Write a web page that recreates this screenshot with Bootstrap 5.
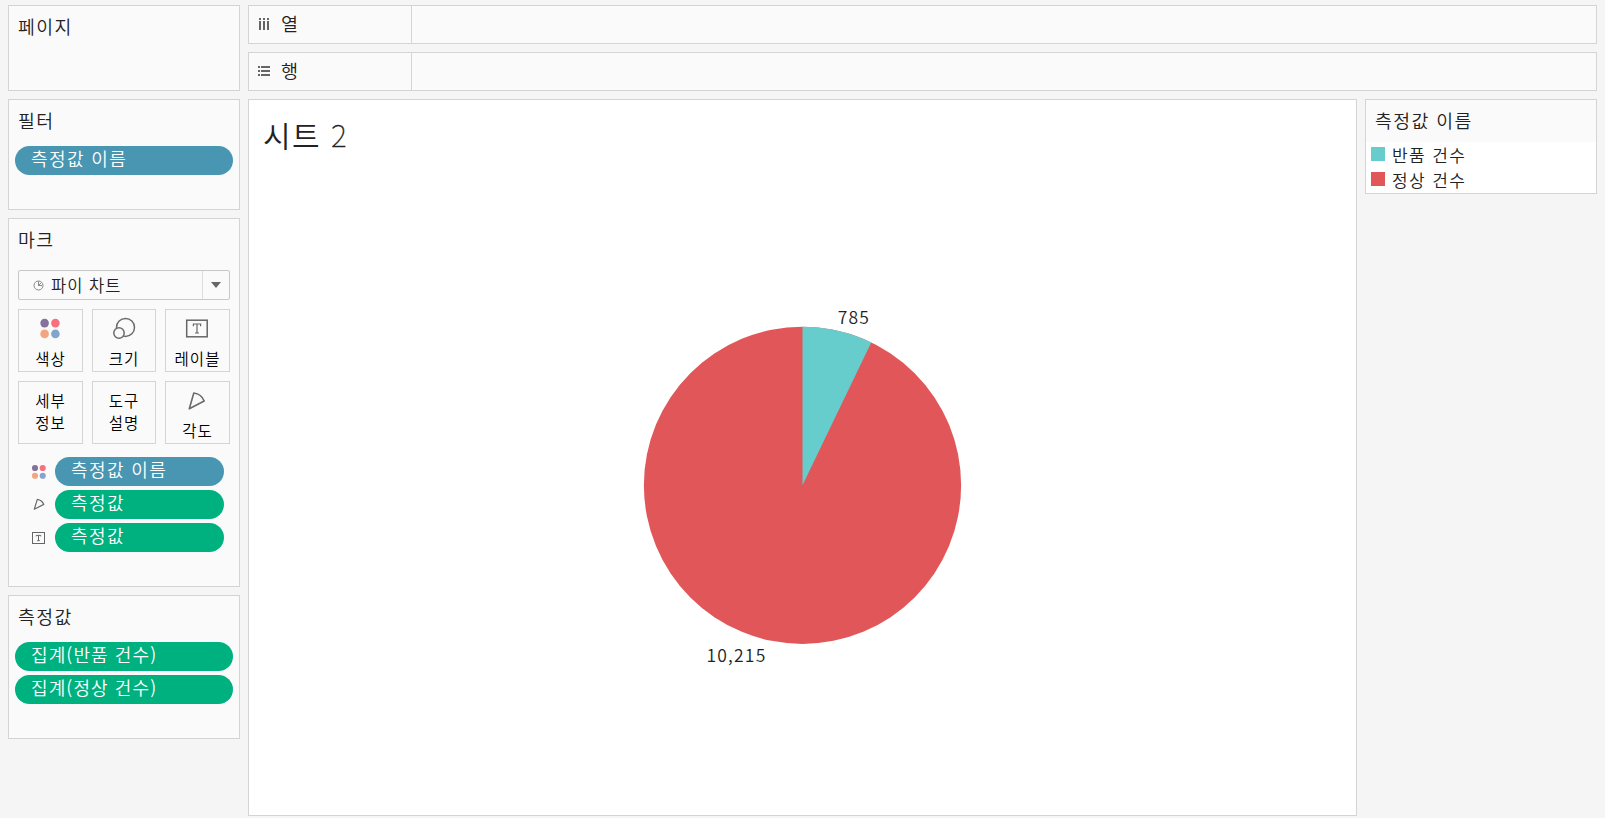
<!DOCTYPE html>
<html lang="ko">
<head>
  <meta charset="UTF-8" />
  <meta name="viewport" content="width=device-width, initial-scale=1" />
  <title>시트 2</title>
  <link href="https://cdn.jsdelivr.net/npm/bootstrap@5.3.0/dist/css/bootstrap.min.css" rel="stylesheet" />
  <style>
    body {
      background-color: #f5f5f5;
      color: #222;
      font-family: "Noto Sans CJK KR", sans-serif;
      font-weight: 350;
      font-size: 18px;
      letter-spacing: 1.4px;
      white-space: nowrap;
    }
    .workspace {
      height: 818px;
      padding: 5px 8px 2px;
      gap: 8px;
    }
    .side {
      width: 232px;
    }
    .panel {
      background-color: #fafafa;
      border: 1px solid #d4d4d4;
    }
    .panel-title {
      height: 46px;
      line-height: 41px;
      padding-left: 9px;
      font-size: 18.3px;
    }
    .panel-pages { height: 86px; }
    .panel-filters { height: 111px; }
    .panel-marks { height: 369px; }
    .panel-values { height: 144px; }

    /* field pills */
    .pill {
      height: 29px;
      line-height: 24px;
      border-radius: 15px;
      padding-left: 16px;
      color: #fff;
      background-color: #00b180;
    }
    .pill-blue {
      background-color: #4996b2;
    }
    .pill-list {
      gap: 4px;
      padding: 0 6px;
    }
    .panel-values .pill {
      letter-spacing: 1.1px;
    }
    .mark-fields {
      padding: 13px 15px 0 22px;
      gap: 4px;
    }
    .mark-fields .mark-icon {
      width: 15px;
      margin-right: 9px;
    }

    /* mark type dropdown */
    .mark-type {
      height: 30px;
      margin: 5px 9px 9px;
      border: 1px solid #c8c8c8;
      border-radius: 2px;
      font-size: 16.5px;
      letter-spacing: 1px;
    }
    .mark-type .caret {
      width: 27px;
      border-left: 1px solid #dedede;
    }
    .mark-grid {
      display: grid;
      grid-template-columns: 65px 64px 65px;
      grid-auto-rows: 63px;
      gap: 9px;
      padding: 0 9px;
    }
    .mark-btn {
      border: 1px solid #d4d4d4;
      color: #000;
      font-size: 15.5px;
      letter-spacing: 1px;
      line-height: 22px;
      text-align: center;
    }
    .mark-btn svg {
      display: block;
      margin: 5px auto 6px;
    }
    .mark-btn-text {
      padding-top: 7px;
    }

    .shelf {
      height: 39px;
    }
    .shelf-name {
      width: 163px;
      padding-left: 9px;
      padding-bottom: 1px;
      border-right: 1px solid #d4d4d4;
      font-size: 18.5px;
    }
    .shelf-name svg {
      margin-right: 9px;
    }
    .sheet {
      background-color: #fff;
      border: 1px solid #d4d4d4;
    }
    .sheet-title {
      height: 72px;
      margin: 0;
      padding-left: 14px;
      font-size: 30px;
      font-weight: 350;
      line-height: 68px;
      letter-spacing: 1.5px;
    }
    .sheet-title span {
      font-weight: 100;
      -webkit-text-stroke: .3px #222;
    }
    .sheet svg text {
      font-size: 17.5px;
      letter-spacing: 1.2px;
      fill: #222;
    }
    .legend-title {
      height: 42px;
    }
    .legend-body {
      background-color: #fff;
      height: 51px;
      padding-left: 5px;
      font-size: 17px;
      line-height: 25px;
      letter-spacing: 1.4px;
    }
    .swatch {
      width: 14px;
      height: 14px;
      margin: 0 7px 1px 0;
    }
  </style>
</head>
<body>

  <svg class="d-none" xmlns="http://www.w3.org/2000/svg">
    <symbol id="icon-color" viewBox="0 0 22 22">
      <circle cx="5.6" cy="5.6" r="4.3" fill="#857199" />
      <circle cx="16.4" cy="5.6" r="4.3" fill="#f87080" />
      <circle cx="5.6" cy="16.4" r="4.3" fill="#f2a57e" />
      <circle cx="16.4" cy="16.4" r="4.3" fill="#83a4cc" />
    </symbol>
  </svg>

  <div class="workspace d-flex">

    <div class="side d-flex flex-column flex-shrink-0 gap-2">
      <div class="panel panel-pages">
        <div class="panel-title">페이지</div>
      </div>

      <div class="panel panel-filters">
        <div class="panel-title">필터</div>
        <div class="pill-list d-flex flex-column">
          <div class="pill pill-blue">측정값 이름</div>
        </div>
      </div>

      <div class="panel panel-marks">
        <div class="panel-title">마크</div>
        <div class="mark-type d-flex">
          <div class="d-flex align-items-center flex-grow-1">
            <svg width="11" height="11" viewBox="0 0 11 11" style="margin: 0 7px 0 14px" fill="none" stroke="#888">
              <circle cx="5.5" cy="5.5" r="4.5" />
              <path d="M5.5 1.5v4h3.6M5.5 5.5l2.7-2.7" />
            </svg>
            <span>파이 차트</span>
          </div>
          <div class="caret d-flex align-items-center justify-content-center">
            <svg width="10" height="6" viewBox="0 0 10 6"><path d="M0 0h10L5 6z" fill="#666" /></svg>
          </div>
        </div>

        <div class="mark-grid">
          <div class="mark-btn">
            <svg width="24" height="26" viewBox="0 -2.5 24 26"><use href="#icon-color" width="22" height="22" /></svg>색상
          </div>
          <div class="mark-btn">
            <svg width="26" height="26" viewBox="0 0 26 26" fill="#fafafa" stroke="#6b6b6b" stroke-width="1.5">
              <circle cx="14.5" cy="12.4" r="9" />
              <circle cx="8" cy="18" r="5.2" />
            </svg>크기
          </div>
          <div class="mark-btn">
            <svg width="28" height="26" viewBox="0 0 28 26" fill="none" stroke="#666" stroke-width="1.5">
              <rect x="2.7" y="5.2" width="20.5" height="16.6" />
              <path d="M9.4 11.3V9h7.2v2.3M13 9v9M11 18h4" stroke-width="1.2" />
            </svg>레이블
          </div>
          <div class="mark-btn mark-btn-text">세부<br />정보</div>
          <div class="mark-btn mark-btn-text">도구<br />설명</div>
          <div class="mark-btn">
            <svg width="28" height="26" viewBox="0 0 28 26" fill="none" stroke="#6b6b6b" stroke-width="1.6" stroke-linejoin="round">
              <path d="M5.3 21.8L9.8 6Q17.5 7 20.2 14Z" />
            </svg>각도
          </div>
        </div>

        <div class="mark-fields d-flex flex-column">
          <div class="d-flex align-items-center">
            <svg class="mark-icon" width="15" height="15" viewBox="0 0 21 21"><use href="#icon-color" width="22" height="22" /></svg>
            <div class="pill pill-blue flex-grow-1">측정값 이름</div>
          </div>
          <div class="d-flex align-items-center">
            <svg class="mark-icon" width="15" height="15" viewBox="0 0 15 15" fill="none" stroke="#6b6b6b" stroke-width="1.2" stroke-linejoin="round">
              <path d="M3.3 12.2L6.3 2.4Q11 3.2 12.8 7.4Z" />
            </svg>
            <div class="pill flex-grow-1">측정값</div>
          </div>
          <div class="d-flex align-items-center">
            <svg class="mark-icon" width="15" height="15" viewBox="0 0 15 15" fill="none" stroke="#666">
              <rect x="1.5" y="2.5" width="12" height="11" />
              <path d="M5.2 6.4V5.4h4.6v1M7.5 5.4v5.2M6.2 10.6h2.6" />
            </svg>
            <div class="pill flex-grow-1">측정값</div>
          </div>
        </div>
      </div>

      <div class="panel panel-values">
        <div class="panel-title">측정값</div>
        <div class="pill-list d-flex flex-column">
          <div class="pill">집계(반품 건수)</div>
          <div class="pill">집계(정상 건수)</div>
        </div>
      </div>
    </div>

    <div class="d-flex flex-column flex-grow-1 gap-2">
      <div class="panel shelf d-flex">
        <div class="shelf-name d-flex align-items-center">
          <svg width="14" height="14" viewBox="0 0 14 14" fill="#666">
            <path d="M1 1h2v2H1zM5 1h2v2H5zM9 1h2v2H9zM1 4h2v9H1zM5 4h2v9H5zM9 4h2v9H9z" />
          </svg>열
        </div>
      </div>
      <div class="panel shelf d-flex">
        <div class="shelf-name d-flex align-items-center">
          <svg width="14" height="14" viewBox="0 0 14 14" fill="#666">
            <path d="M0 2h2v2H0zM0 6h2v2H0zM0 10h2v2H0zM3 2h9v2H3zM3 6h9v2H3zM3 10h9v2H3z" />
          </svg>행
        </div>
      </div>

      <div class="d-flex flex-grow-1 gap-2">
        <div class="sheet flex-grow-1">
          <h1 class="sheet-title">시트 <span>2</span></h1>
          <svg class="d-block" width="1107" height="640" viewBox="0 0 1107 640">
            <circle cx="553.5" cy="313.3" r="158.6" fill="#e15759" />
            <path id="returnSlice" fill="#66cccc" />
            <text x="588.7" y="152">785</text>
            <text x="457.5" y="490">10,215</text>
          </svg>
        </div>

        <div class="side flex-shrink-0">
          <div class="panel">
            <div class="panel-title legend-title">측정값 이름</div>
            <div class="legend-body">
              <div class="d-flex align-items-center"><span class="swatch" style="background-color: #66cccc"></span>반품 건수</div>
              <div class="d-flex align-items-center"><span class="swatch" style="background-color: #e15759"></span>정상 건수</div>
            </div>
          </div>
        </div>
      </div>
    </div>

  </div>

  <script src="https://cdn.jsdelivr.net/npm/bootstrap@5.3.0/dist/js/bootstrap.bundle.min.js"></script>
  <script>
    const returned = 785;
    const normal = 10215;

    // Slice starts at 12 o'clock and runs clockwise
    const cx = 553.5, cy = 313.3, r = 158.6;
    const angle = returned / (returned + normal) * 2 * Math.PI;
    const x = cx + r * Math.sin(angle);
    const y = cy - r * Math.cos(angle);
    document.getElementById('returnSlice')
      .setAttribute('d', `M${cx} ${cy}V${cy - r}A${r} ${r} 0 0 1 ${x} ${y}Z`);
  </script>

</body>
</html>
